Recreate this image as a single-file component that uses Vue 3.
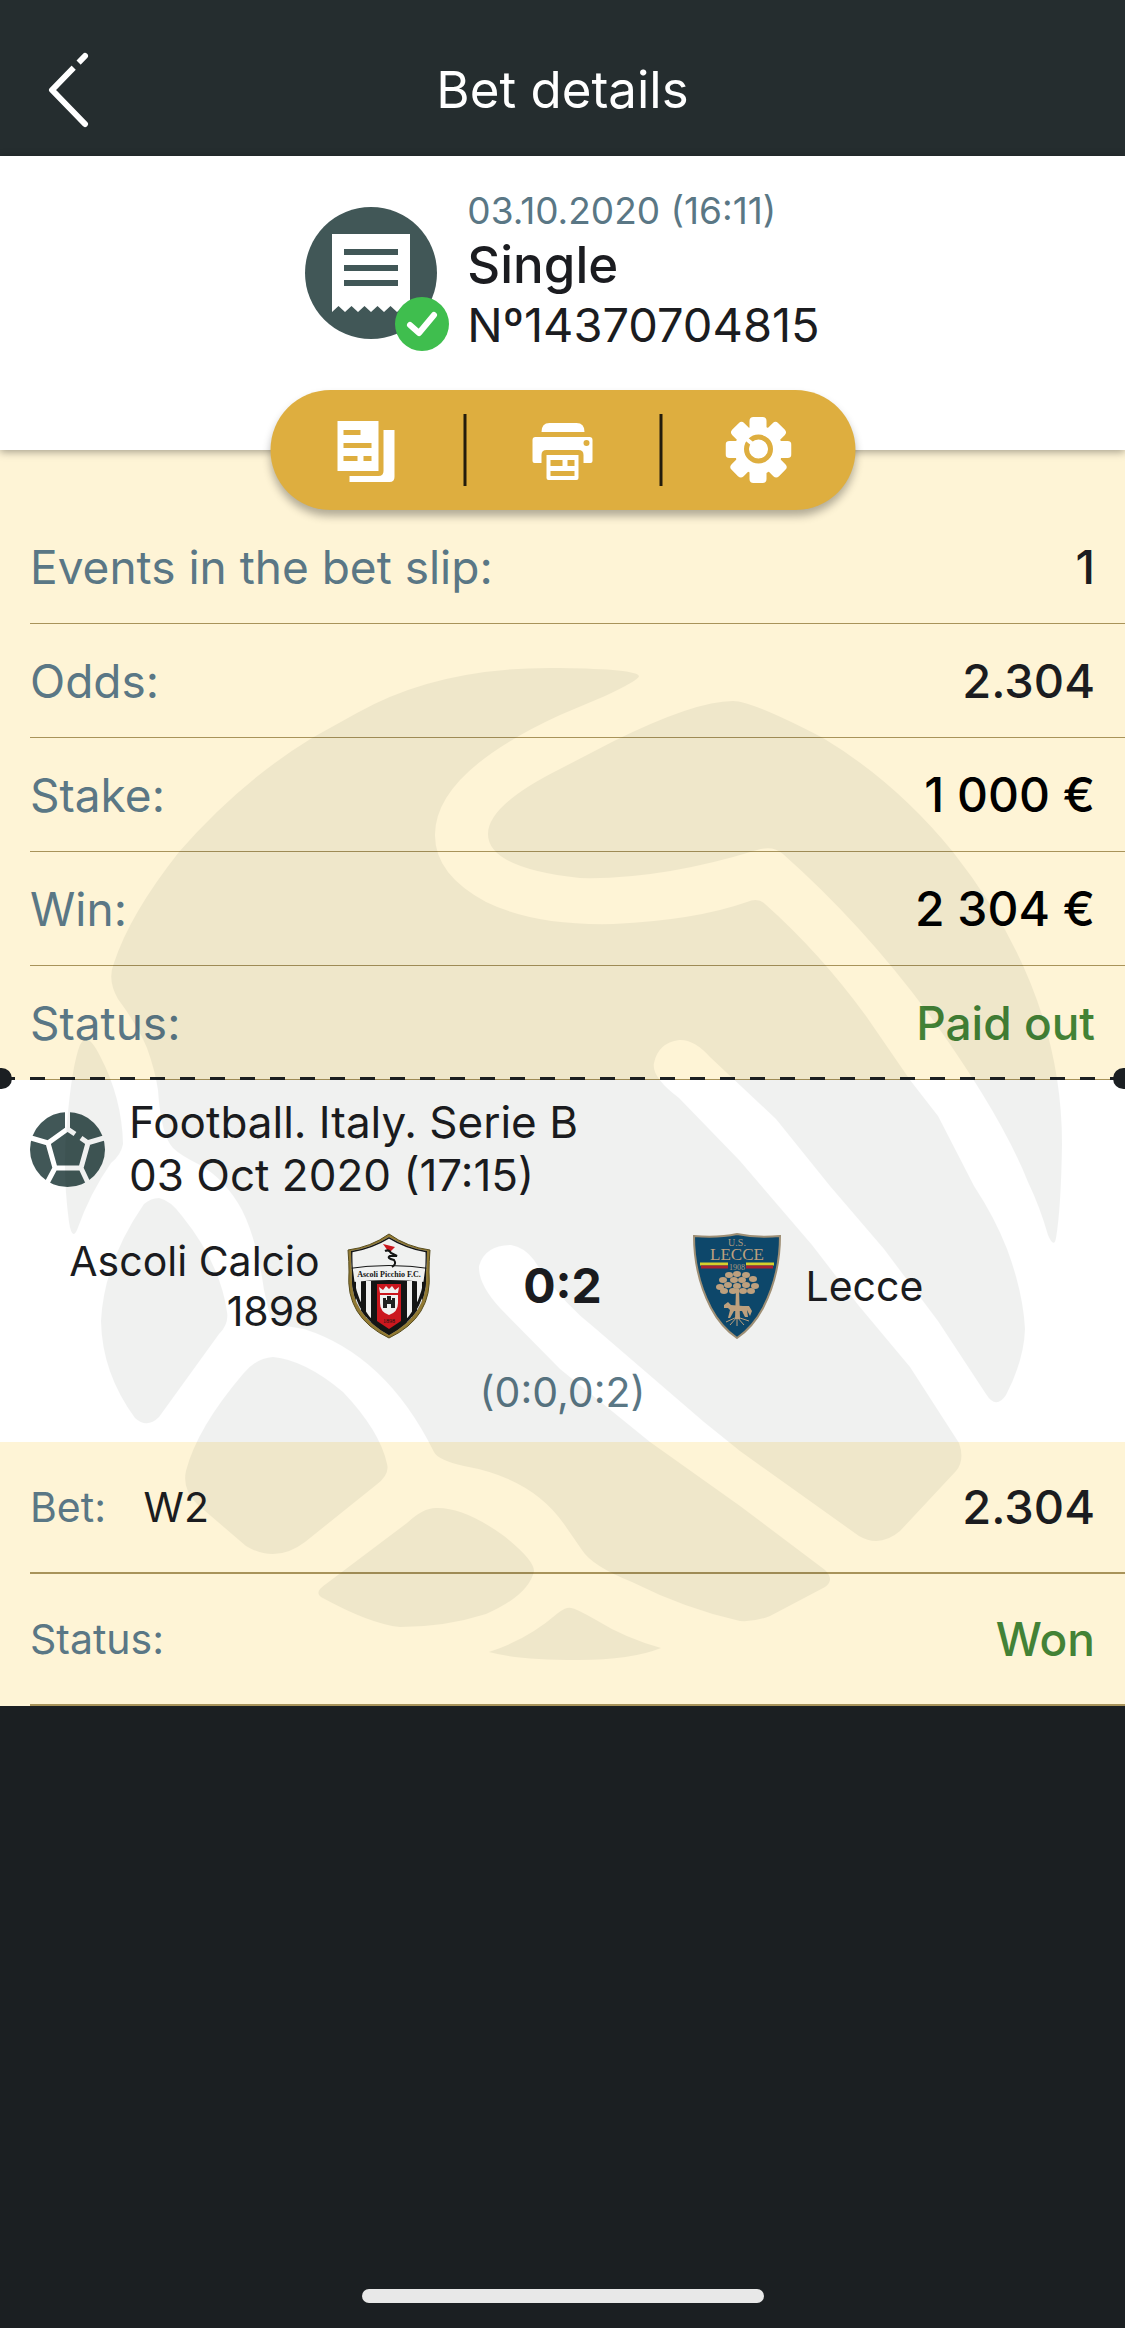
<template>
    <div class="page">
        <header class="topbar">
            <button class="back" type="button" aria-label="Back">
                <svg viewBox="0 0 42 76">
                    <path d="M37 72L4 38L37 4" />
                    <path class="gap" d="M22 7L33 18" />
                </svg>
            </button>
            <h1>Bet details</h1>
        </header>

        <section class="ticket">
            <div class="ticket-info">
                <svg class="ticket-icon" viewBox="0 0 144 148">
                    <circle cx="66" cy="66" r="66" fill="#415757" />
                    <path d="M27 27H105V105L98.500 99L92 105L85.500 99L79 105L72.500 99L66 105L59.500 99L53 105L46.500 99L40 105L33.500 99L27 105Z" fill="#fff" />
                    <path d="M39 45H93M39 61H93M39 76H93" stroke="#415757" stroke-width="6" />
                    <circle cx="117" cy="117" r="27" fill="#3fbe4e" />
                    <path d="M105 118L114 126L129 108" fill="none" stroke="#fff" stroke-width="6" stroke-linecap="round" stroke-linejoin="round" />
                </svg>
                <div>
                    <p class="date">03.10.2020 (16:11)</p>
                    <p class="kind">Single</p>
                    <p class="number">Nº14370704815</p>
                </div>
            </div>

            <div class="actions">
                <button type="button" aria-label="Copy bet slip">
                    <svg viewBox="0 0 66 66">
                        <path fill-rule="evenodd" d="M4 4H45V54H4ZM10 13V18H27V13ZM10 26V31H38V26ZM10 39V44H24V39ZM30 39V44H38V39Z" />
                        <path d="M50 13H61V60Q61 65 56 65H16V59H45Q50 59 50 54Z" />
                    </svg>
                </button>
                <button type="button" aria-label="Print">
                    <svg viewBox="0 0 66 66">
                        <path d="M12 15Q12 6 20 6H47Q55 6 55 15Z" />
                        <path fill-rule="evenodd" d="M6 20H60Q63 20 63 23V44Q63 46 61 46H54V38Q54 33 49 33H17Q12 33 12 38V46H5Q3 46 3 44V23Q3 20 6 20ZM57 23A3 3 0 1 0 57 29A3 3 0 1 0 57 23Z" />
                        <path fill-rule="evenodd" d="M17 38H49V61Q49 63 47 63H19Q17 63 17 61ZM21 43V49H33V43ZM38 43V49H45V43ZM21 54V59H45V54Z" />
                    </svg>
                </button>
                <button type="button" aria-label="Settings">
                    <svg viewBox="0 0 66 66">
                        <circle cx="33" cy="33" r="24" />
                        <rect v-for="angle in [0, 45, 90, 135]" :key="angle" x="24" y="0" width="17" height="66" rx="4"
                            :transform="`rotate(${angle} 33 33)`" />
                        <circle cx="33" cy="32" r="12" fill="none" stroke="#deae3f" stroke-width="5" />
                        <path d="M21 22L33 32" stroke="#fff" stroke-width="4" />
                        <circle cx="33" cy="32" r="9" />
                    </svg>
                </button>
            </div>
        </section>

        <main class="sheet">
            <dl class="summary">
                <div v-for="row in summary" :key="row.label" class="row">
                    <dt>{{ row.label }}</dt>
                    <dd :class="row.tone">{{ row.value }}</dd>
                </div>
            </dl>

            <section class="event">
                <div class="tear"></div>
                <div class="league">
                    <svg class="ball" viewBox="0 0 75 75">
                        <circle cx="37.500" cy="37.500" r="37.500" fill="#415757" />
                        <path d="M37.500 0V18M1 26L18 31M74 26L57 31M16 73L25 56M59 73L51 56M45 22L37.500 17L18 31L25 56H51L58 31L51 26"
                            fill="none" stroke="#fff" stroke-width="5" />
                    </svg>
                    <p>Football. Italy. Serie B<br>03 Oct 2020 (17:15)</p>
                </div>

                <div class="match">
                    <div class="team home">
                        <span>Ascoli Calcio 1898</span>
                        <svg class="crest" viewBox="0 0 88 106">
                            <clipPath id="ascoli">
                                <path d="M44 4Q26 15 6 18Q6 30 7 40Q4 80 44 102Q84 80 81 40Q82 30 82 18Q62 15 44 4Z" />
                            </clipPath>
                            <path d="M44 1Q26 14 3 17Q4 29 4 39Q0 84 44 105Q88 84 84 39Q84 29 85 17Q62 14 44 1Z" fill="#9b8136" stroke="#5d5020" stroke-width="1" />
                            <g clip-path="url(#ascoli)">
                                <rect width="88" height="106" fill="#fff" />
                                <path d="M0 50Q44 44 88 50V106H0Z" fill="#151515" />
                                <path d="M11 48H16V80H11ZM21 48H26V90H21ZM62 48H67V90H62ZM72 48H77V80H72Z" fill="#fff" />
                                <path d="M32 51H56V88L44 96L32 88Z" fill="#d8171f" />
                                <path d="M35 60L34 54L38 57L41 53L44 56L47 53L50 57L54 54L53 60ZM35 62H53V70Q53 79 44 82Q35 79 35 70Z" fill="#fff" />
                                <path d="M38 65H41V67H42V63H46V67H47V65H50V75H46V71H42V75H38Z" fill="#222" />
                                <path d="M0 36Q44 29 88 36" fill="none" stroke="#151515" stroke-width="1" />
                                <path d="M44 102Q84 80 82 18Q62 15 44 4Q26 15 6 18Q4 80 44 102Z" fill="none" stroke="#151515" stroke-width="3" />
                            </g>
                            <path d="M38 11L50 14L46 18L43 18Z" fill="#d8171f" />
                            <path d="M40 18Q44 16 46 20L52 23L45 23Q41 25 49 27Q52 31 47 34" fill="none" stroke="#151515" stroke-width="2" />
                            <text x="44" y="44" class="crest-text dark">Ascoli Picchio F.C.</text>
                            <text x="44" y="90" class="crest-text year">1898</text>
                        </svg>
                    </div>
                    <strong class="score">0:2</strong>
                    <div class="team">
                        <svg class="crest" viewBox="0 0 88 106">
                            <path d="M1 3Q25 5 44 1Q63 5 87 3Q87 42 70 75Q60 94 44 105Q28 94 18 75Q1 42 1 3Z" fill="#0e4a70" stroke="#a8977c" stroke-width="2" />
                            <path d="M7 31H35M53 31H81" stroke="#e3dc2d" stroke-width="3" />
                            <path d="M8 34H35M53 34H80" stroke="#b52335" stroke-width="3" />
                            <text x="44" y="13" class="crest-text us">U.S.</text>
                            <text x="44" y="27" class="crest-text name">LECCE</text>
                            <text x="44" y="37" class="crest-text est">1908</text>
                            <g fill="#c9a985">
                                <path d="M43 56H46L47 86H42Z" />
                                <ellipse v-for="([x, y], i) in leaves" :key="i" :cx="x" :cy="y" rx="4" ry="3" />
                                <path d="M31 72L35 69L38 72L50 73L56 73L59 78L57 83L54 77L55 84H52L49 78L41 78L37 85H35L37 77L35 75L31 75Z" />
                            </g>
                            <path d="M44 84L33 89M44 84L37 92M44 84V93M44 84L51 92M44 84L56 88" stroke="#c9a985" stroke-width="1" />
                        </svg>
                        <span>Lecce</span>
                    </div>
                </div>
                <p class="periods">(0:0,0:2)</p>
            </section>

            <dl class="bet">
                <div class="row">
                    <dt>Bet: <span class="pick">W2</span></dt>
                    <dd>2.304</dd>
                </div>
                <div class="row">
                    <dt>Status:</dt>
                    <dd class="green">Won</dd>
                </div>
            </dl>

            <svg class="watermark" viewBox="0 450 1125 1256" aria-hidden="true">
                <path d="M639 676Q636 669 560 668Q440 666 357 713L312 738Q240 782 179 852Q130 914 114 963Q107 980 118 999Q138 1026 147 1048Q155 1070 158 1090Q161 1135 173 1148Q180 1155 200 1165Q225 1179 242 1210Q257 1240 264 1290L271 1321Q273 1324 304 1329Q386 1355 434 1452Q438 1460 464 1466Q532 1478 564 1524L582 1550Q592 1566 632 1582Q686 1609 740 1621Q755 1622 770 1616L825 1587Q835 1580 825 1570L740 1506L650 1442L560 1369L500 1308Q478 1284 479 1266Q485 1245 511 1245Q524 1247 534 1260Q560 1301 596 1329L704 1422L740 1451L859 1536Q880 1548 900 1531L956 1471Q965 1460 959 1443L910 1367L859 1306L812 1245L740 1161L679 1098Q651 1077 654 1063Q658 1043 679 1040Q694 1039 710 1057L776 1119L830 1186L884 1249L938 1321L986 1394Q996 1410 1006 1395Q1024 1360 1025 1329Q1023 1292 1007 1249Q995 1218 974 1186L938 1116L910 1080L866 1016Q820 953 765 904Q758 897 747 902Q696 920 614 924Q535 926 486 902Q434 874 435 834Q436 772 560 715L605 696Q639 680 639 676Z" />
                <path d="M733 701Q752 701 823 738Q896 782 953 852Q1062 990 1062 1144Q1061 1208 1056 1238Q1054 1249 1048 1235Q1040 1207 1028 1182Q1001 1114 928 1013Q862 924 783 854Q773 845 757 850Q660 880 580 878Q488 868 488 834Q488 805 560 769L614 741Q695 701 733 701Z" />
                <path d="M86 1039Q92 1040 100 1056Q122 1098 123 1144Q121 1155 111 1163Q90 1193 77 1230Q72 1241 69 1222Q62 1169 67 1123Q72 1065 80 1045Q83 1039 86 1039Z" />
                <path d="M159 1198Q170 1200 182 1216Q220 1263 227 1312Q229 1324 219 1334L159 1417Q147 1429 135 1418Q102 1373 101 1321Q104 1262 144 1204Q151 1198 159 1198Z" />
                <path d="M273 1357Q305 1360 343 1392Q380 1431 387 1464Q390 1475 376 1485L305 1542Q276 1564 246 1546L197 1504Q182 1489 186 1471Q197 1428 243 1374Q256 1358 273 1357Z" />
                <path d="M436 1508Q464 1507 504 1536Q534 1560 534 1571Q529 1595 486 1614Q445 1627 400 1627Q370 1624 321 1597Q314 1592 326 1584L407 1523Q423 1508 436 1508Z" />
                <path d="M571 1608Q575 1608 596 1620Q625 1638 661 1648Q631 1660 578 1660Q518 1660 489 1652Q527 1640 558 1613Q566 1607 571 1608Z" />
            </svg>
        </main>

        <div class="home-bar"></div>
    </div>
</template>

<script setup>
const summary = [
    { label: 'Events in the bet slip:', value: '1' },
    { label: 'Odds:', value: '2.304' },
    { label: 'Stake:', value: '1 000 €', tone: 'money' },
    { label: 'Win:', value: '2 304 €', tone: 'money' },
    { label: 'Status:', value: 'Paid out', tone: 'green' }
]

// foliage of the tree on the Lecce crest
const leaves = [
    [44, 41], [36, 42], [53, 42], [30, 47], [60, 46], [41, 47], [49, 47],
    [27, 54], [35, 52], [44, 53], [53, 52], [62, 53], [31, 58], [40, 58], [50, 58], [58, 58]
]
</script>

<style>
body {
    background: #1b1f22;
}
</style>

<style scoped>
.page {
    display: flex;
    flex-direction: column;
    min-height: 100vh;
    overflow-x: clip;
    font-family: Inter, "Liberation Sans", sans-serif;
    font-size: 41px;
    line-height: 50px;
    color: #1b1c20;
    background: #1b1f22;
}

h1, p, dl, dd {
    margin: 0;
}

button {
    padding: 0;
    border: 0;
    background: none;
    cursor: pointer;
}

svg {
    display: block;
}

.topbar {
    display: grid;
    grid-template-columns: 1fr auto 1fr;
    align-items: center;
    box-sizing: border-box;
    height: 156px;
    padding: 24px 48px 0;
    color: #fff;
    background: #252d2f;
}

.topbar h1 {
    font-size: 51px;
    font-weight: 400;
    line-height: 60px;
}

.back {
    justify-self: start;
}

.back svg {
    width: 42px;
    height: 76px;
    fill: none;
    stroke: #fff;
    stroke-width: 6;
    stroke-linecap: round;
    stroke-linejoin: round;
}

.back .gap {
    stroke: #252d2f;
    stroke-width: 7;
    stroke-linecap: butt;
}

.ticket {
    position: relative;
    z-index: 1;
    padding: 31px 30px 95px;
    background: #fff;
    box-shadow: 0 2px 8px rgba(0, 0, 0, 0.35);
}

.ticket-info {
    display: flex;
    justify-content: center;
    align-items: flex-end;
    gap: 18px;
}

.ticket-icon {
    width: 144px;
    height: 148px;
}

.date {
    font-size: 37px;
    line-height: 48px;
    color: #5a7785;
}

.kind {
    font-size: 51px;
    font-weight: 500;
    line-height: 60px;
}

.number {
    font-size: 47px;
    line-height: 60px;
}

.actions {
    position: absolute;
    bottom: -60px;
    left: 50%;
    display: flex;
    align-items: center;
    width: 585px;
    height: 120px;
    border-radius: 60px;
    background: #deae3f;
    box-shadow: 0 6px 9px rgba(0, 0, 0, 0.3);
    transform: translateX(-50%);
}

.actions button {
    display: flex;
    flex: 1;
    justify-content: center;
    align-items: center;
    height: 72px;
}

.actions button:not(:last-child) {
    border-right: 3px solid #241c0c;
}

.actions svg {
    width: 66px;
    height: 66px;
    fill: #fff;
}

.sheet {
    position: relative;
    padding-top: 60px;
    background: #fef4d6;
}

.row {
    display: flex;
    justify-content: space-between;
    align-items: center;
    box-sizing: border-box;
    height: 114px;
    margin-left: 30px;
    padding-right: 30px;
    border-bottom: 1px solid #a8935a;
}

.row dt {
    color: #5a7785;
}

.row dd {
    font-size: 47px;
    font-weight: 500;
}

.summary dt {
    font-size: 46px;
}

.row .money {
    font-size: 48px;
    color: #000;
}

.row .green {
    font-size: 46px;
    color: #438236;
}

.bet .row {
    height: 132px;
    border-bottom-width: 2px;
}

.pick {
    margin-left: 26px;
    color: #1b1c20;
}

.event {
    position: relative;
    padding: 16px 30px 25px;
    background: #fff;
}

.tear {
    position: absolute;
    top: -3px;
    left: 0;
    right: 0;
    height: 3px;
    background: repeating-linear-gradient(90deg, #1b1f22 0 15px, transparent 15px 30px);
}

.tear::before,
.tear::after {
    content: "";
    position: absolute;
    top: -9px;
    left: -9px;
    width: 21px;
    height: 21px;
    border-radius: 50%;
    background: #1b1f22;
}

.tear::after {
    left: auto;
    right: -9px;
}

.league {
    display: flex;
    align-items: center;
    gap: 24px;
    font-size: 44px;
    line-height: 53px;
}

.ball {
    flex: none;
    width: 75px;
    height: 75px;
}

.match {
    display: grid;
    grid-template-columns: 1fr 260px 1fr;
    align-items: center;
    margin-top: 31px;
}

.team {
    display: flex;
    align-items: center;
    gap: 25px;
}

.home {
    justify-content: flex-end;
    text-align: right;
}

.home span {
    max-width: 290px;
}

.crest {
    flex: none;
    width: 88px;
    height: 106px;
}

.crest-text {
    font-family: "Liberation Serif", serif;
    text-anchor: middle;
}

.dark {
    font-size: 8px;
    font-weight: bold;
    fill: #151515;
}

.year {
    font-size: 6px;
    fill: #151515;
}

.us {
    font-size: 10px;
    fill: #b9a386;
}

.name {
    font-size: 17px;
    fill: #c9a985;
}

.est {
    font-size: 8px;
    fill: #b9a386;
}

.score {
    font-size: 48px;
    font-weight: 700;
    text-align: center;
}

.periods {
    margin-top: 28px;
    text-align: center;
    color: #5a7785;
}

.watermark {
    position: absolute;
    top: 0;
    left: 0;
    width: 100%;
    fill: #0a1a10;
    opacity: 0.055;
    pointer-events: none;
}

.home-bar {
    width: 402px;
    height: 14px;
    margin: auto auto 25px;
    border-radius: 7px;
    background: #e8e8e8;
}
</style>
